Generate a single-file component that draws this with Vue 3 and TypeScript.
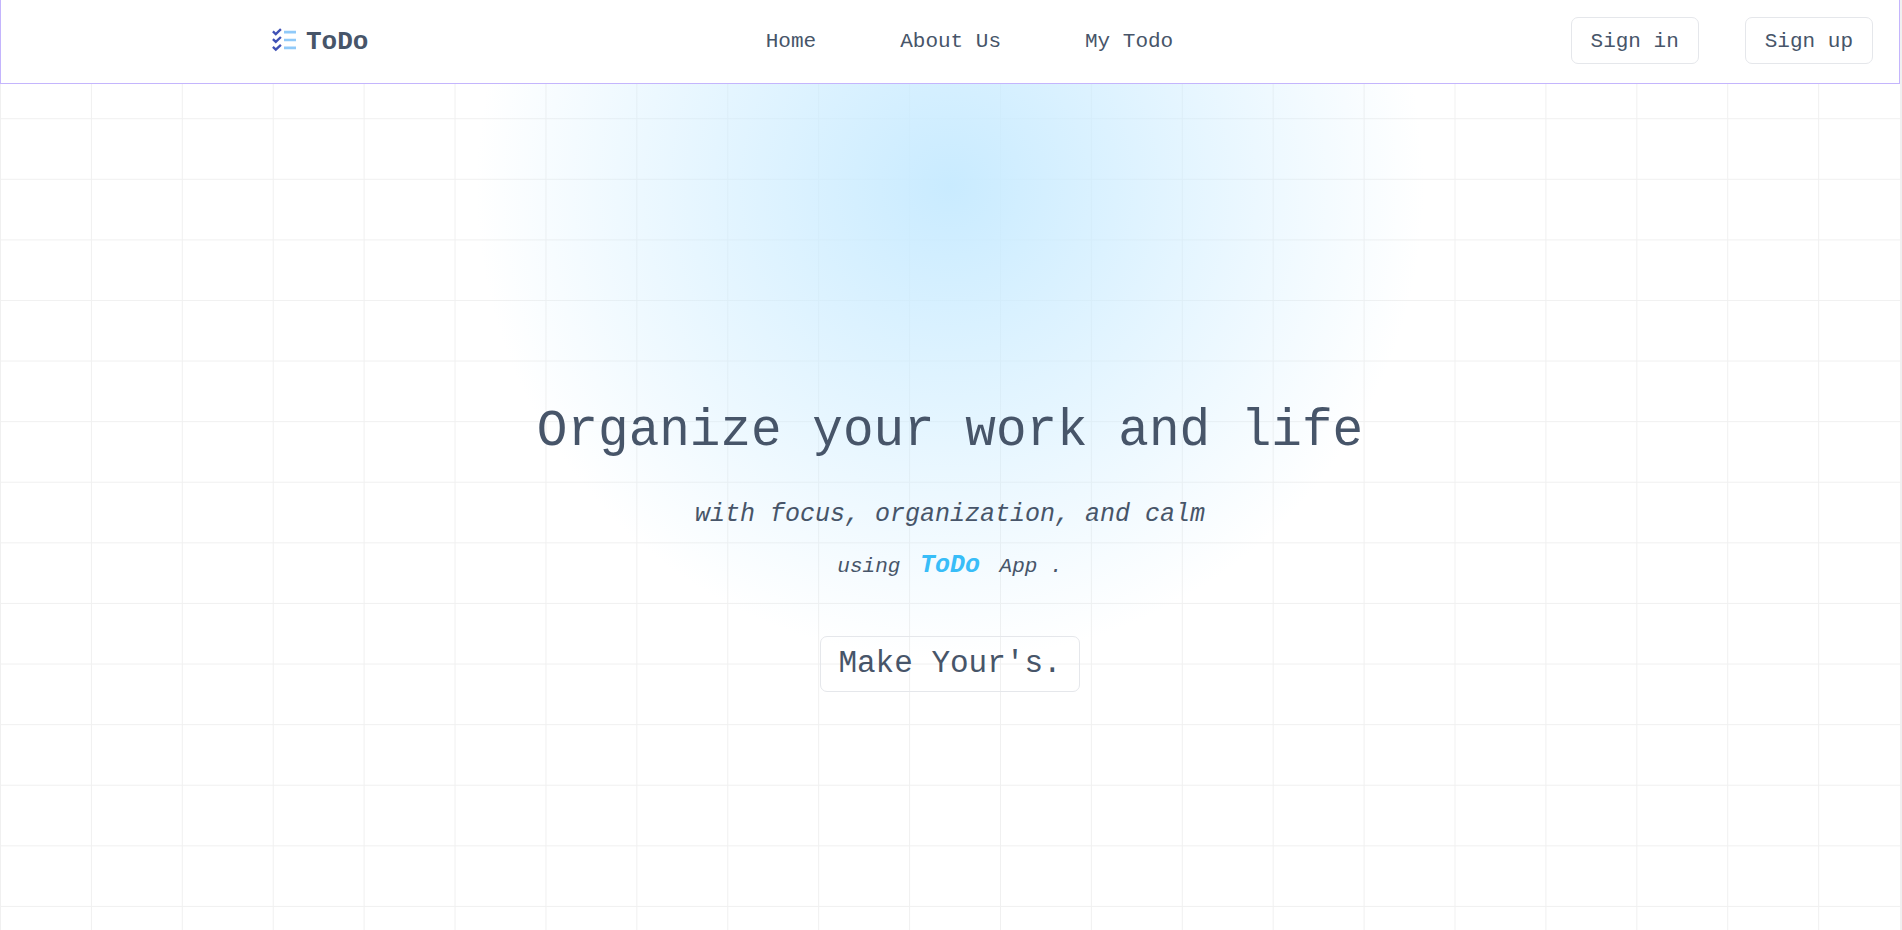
<script setup lang="ts">
interface NavLink {
  label: string
  href: string
}

const links: NavLink[] = [
  { label: 'Home', href: '#home' },
  { label: 'About Us', href: '#about' },
  { label: 'My Todo', href: '#todo' },
]
</script>

<template>
  <div class="page">
    <header class="bar">
      <a class="brand" href="#home">
        <svg class="logo" viewBox="0 0 24 24" fill="none" aria-hidden="true">
          <g stroke="#3f51b5" stroke-width="2.3">
            <path d="M0.9 3.3 3.8 6.1 8.9 1.2" />
            <path d="M0.9 11.1 3.8 13.9 8.9 9" />
            <path d="M0.9 18.9 3.8 21.7 8.9 16.8" />
          </g>
          <path d="M12 4.2H24M12 12H24M12 19.8H24" stroke="#90caf9" stroke-width="2.7" />
        </svg>
        <span>ToDo</span>
      </a>
      <nav class="links" aria-label="Main">
        <a v-for="link in links" :key="link.label" :href="link.href">{{ link.label }}</a>
      </nav>
      <div class="account">
        <button type="button" class="btn">Sign in</button>
        <button type="button" class="btn">Sign up</button>
      </div>
    </header>

    <main class="hero">
      <h1>Organize your work and life</h1>
      <p class="tagline">with focus, organization, and calm</p>
      <p class="using">using <strong>ToDo</strong> App .</p>
      <button type="button" class="btn cta">Make Your's.</button>
    </main>
  </div>
</template>

<style>
body {
  margin: 0;
}
</style>

<style scoped>
.page {
  /* Eleven columns per 1000px; each cell is three wide to two high. */
  --cell-w: calc(1000px / 11);
  --cell-h: calc(2000px / 33);
  box-sizing: border-box;
  min-height: 100vh;
  display: flex;
  flex-direction: column;
  color: #475569;
  font-family: "Liberation Mono", monospace;
  font-size: 21px;
  line-height: 28px;
  border-right: 2px solid #f0f0f0;
  background-color: #fff;
  background-image:
    radial-gradient(circle 474px at 50% 186px, #c9ebff, transparent),
    linear-gradient(to right, #f0f0f0 1px, transparent 1px),
    linear-gradient(to bottom, #f0f0f0 1px, transparent 1px);
  background-size: 100% 100%, var(--cell-w) var(--cell-h), var(--cell-w) var(--cell-h);
  background-position: 0 0, 0 -3px, 0 -3px;
}

.bar {
  box-sizing: border-box;
  height: 84px;
  padding: 0 26px 3px 271px;
  display: flex;
  align-items: center;
  justify-content: space-between;
  background: #fff;
  border: 1px solid #c4b5fd;
  border-top: 0;
}

.brand {
  display: flex;
  align-items: center;
  gap: 10px;
  color: inherit;
  font-size: 26px;
  font-weight: 700;
  text-decoration: none;
}

.brand span {
  padding-top: 3px;
}

.logo {
  width: 24px;
  height: 24px;
}

.links {
  display: flex;
  gap: 84px;
  padding-top: 3px;
}

.links a {
  color: inherit;
  text-decoration: none;
}

.account {
  display: flex;
  gap: 46px;
}

.btn {
  padding: 10px 19px 7px;
  color: inherit;
  font: inherit;
  background: transparent;
  border: 1px solid #e5e7eb;
  border-radius: 7px;
  cursor: pointer;
}

.hero {
  flex: 1;
  display: flex;
  flex-direction: column;
  align-items: center;
  padding-top: 316px;
}

h1,
p {
  margin: 0;
  font-weight: 400;
}

h1 {
  font-size: 51px;
  line-height: 64px;
}

.tagline {
  margin-top: 33px;
  font-size: 25px;
  font-style: italic;
  line-height: 36px;
}

.using {
  margin-top: 15px;
  font-style: italic;
  line-height: 36px;
}

.using strong {
  margin: 0 7px;
  color: #38bdf8;
  font-size: 25px;
}

.cta {
  margin-top: 51px;
  padding: 8px 17px;
  font-size: 31px;
  line-height: 38px;
}
</style>
